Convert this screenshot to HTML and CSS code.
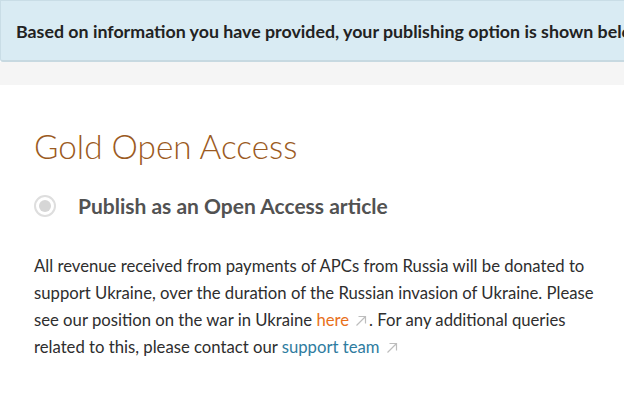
FILE: index.html
```html
<!DOCTYPE html>
<html>
<head>
<meta charset="utf-8">
<link rel="stylesheet" href="styles.css">
</head>
<body>
<div class="banner">Based on information you have provided, your publishing option is shown below</div>
<div class="strip"></div>
<main class="content">
  <h1 class="title">Gold Open Access</h1>
  <label class="option">
    <span class="radio"><span class="dot"></span></span>
    <span class="option-label">Publish as an Open Access article</span>
  </label>
  <p class="note">All revenue received from payments of APCs from Russia will be donated to support Ukraine, over the duration of the Russian invasion of Ukraine. Please see our position on the war in Ukraine <a class="link orange" href="#">here</a><svg class="ext" viewBox="0 0 12 12" width="12" height="12"><path d="M1.5 10.5 L10 2 M3.5 1.5 H10.5 V8.5" fill="none" stroke="#bdbdbd" stroke-width="1.2"/></svg>. For any additional queries related to this, please contact our <a class="link blue" href="#">support team</a><svg class="ext" viewBox="0 0 12 12" width="12" height="12"><path d="M1.5 10.5 L10 2 M3.5 1.5 H10.5 V8.5" fill="none" stroke="#bdbdbd" stroke-width="1.2"/></svg></p>
</main>
</body>
</html>
```
FILE: styles.css
```css
html, body {
  margin: 0;
  padding: 0;
  background: #fff;
  overflow: hidden;
}
body {
  font-family: Lato, "Liberation Sans", sans-serif;
  width: 624px;
  height: 412px;
}
.banner {
  background: #d9ebf3;
  border-top: 1px solid #c9dde6;
  border-bottom: 2px solid #c7d9e1;
  border-left: 1px solid #c9dde6;
  border-bottom-left-radius: 3px;
  height: 59px;
  box-sizing: content-box;
  padding: 0 0 0 15px;
  display: flex;
  align-items: center;
  white-space: nowrap;
  overflow: hidden;
  font-size: 17.8px;
  font-weight: 700;
  color: #222;
}
.strip {
  height: 23px;
  background: #f5f5f5;
}
.content {
  padding: 40px 20px 0 34px;
}
.title {
  margin: 0;
  font-size: 33.3px;
  font-weight: 300;
  color: #9b5a22;
  line-height: 42px;
}
.option {
  display: flex;
  align-items: center;
  margin-top: 26px;
  gap: 22px;
}
.radio {
  width: 18px;
  height: 18px;
  border: 2px solid #dedede;
  border-radius: 50%;
  display: flex;
  align-items: center;
  justify-content: center;
}
.dot {
  width: 12px;
  height: 12px;
  border-radius: 50%;
  background: #d6d6d6;
}
.option-label {
  font-size: 21px;
  font-weight: 700;
  color: #525252;
}
.note {
  margin: 35px 0 0;
  font-size: 16.7px;
  line-height: 27px;
  color: #2e2e2e;
}
.link {
  text-decoration: none;
}
.orange { color: #e8701a; }
.blue { color: #2f7ca0; }
.ext {
  margin: 0 2px 0 6px;
  vertical-align: -1px;
}
```
